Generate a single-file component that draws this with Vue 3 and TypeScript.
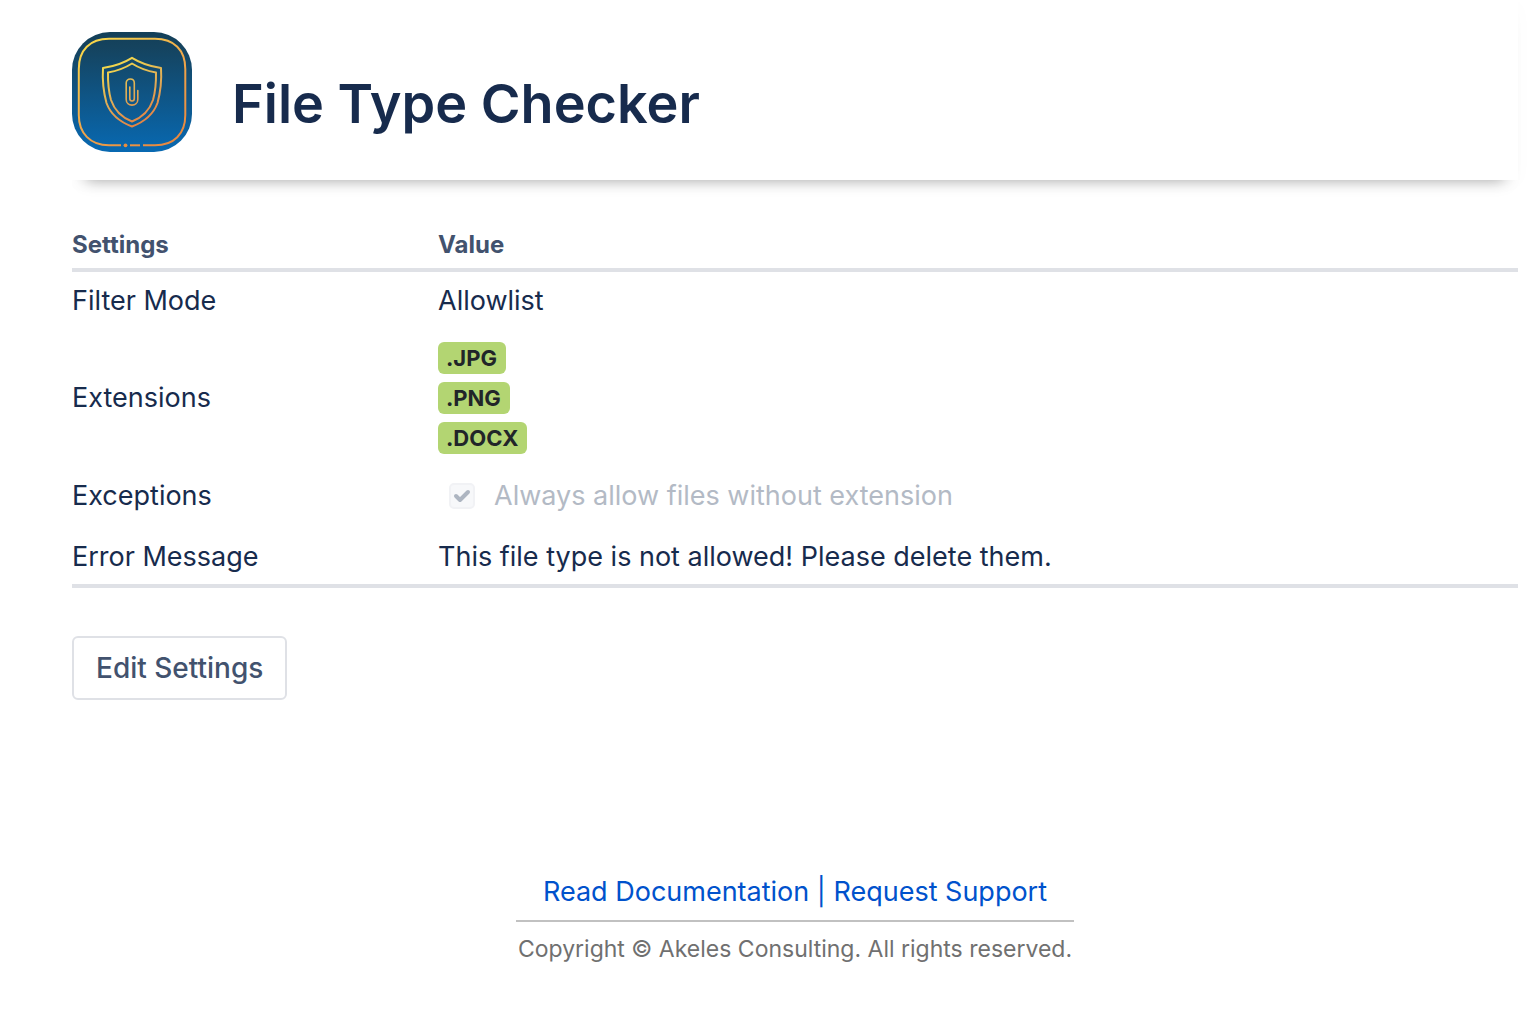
<script setup lang="ts">
import { ref } from 'vue'

const filterMode = ref<string>('Allowlist')
const extensions = ref<string[]>(['.JPG', '.PNG', '.DOCX'])
const allowWithoutExtension = ref<boolean>(true)
const errorMessage = ref<string>('This file type is not allowed! Please delete them.')
</script>

<template>
  <main class="page">
    <header class="banner">
      <svg class="logo" viewBox="0 0 120 120" aria-hidden="true">
        <defs>
          <linearGradient id="tile" x1="0" y1="0" x2="0" y2="1">
            <stop offset="0" stop-color="#133f58" />
            <stop offset="0.12" stop-color="#15435e" />
            <stop offset="1" stop-color="#0869b2" />
          </linearGradient>
          <linearGradient id="gold" gradientUnits="userSpaceOnUse" x1="20" y1="6" x2="95" y2="116">
            <stop offset="0" stop-color="#f9d84a" />
            <stop offset="0.5" stop-color="#f0a84b" />
            <stop offset="1" stop-color="#e8873f" />
          </linearGradient>
          <linearGradient id="crest" gradientUnits="userSpaceOnUse" x1="40" y1="28" x2="72" y2="94">
            <stop offset="0" stop-color="#f5dc4b" />
            <stop offset="0.5" stop-color="#dfad57" />
            <stop offset="1" stop-color="#e57f42" />
          </linearGradient>
        </defs>
        <rect width="120" height="120" rx="38" fill="url(#tile)" />
        <g fill="none" stroke="url(#gold)" stroke-width="2">
          <path d="M49 113.300H37C18 113.300 6.800 101 6.800 83V37C6.800 18 18 6.800 37 6.800H83C102 6.800 113.300 18 113.300 37V83C113.300 102 102 113.300 83 113.300H71" />
          <path d="M58 113.300H68" />
        </g>
        <circle cx="53.500" cy="113.300" r="1.900" fill="#e98d3e" />
        <g fill="none" stroke="url(#crest)" stroke-width="2" stroke-linejoin="round" stroke-linecap="round">
          <path d="M60 25.800C51 31.500 41 34.500 31 36C30.300 47 31.500 60 34.500 71C38.500 82 48 90 60 94.500C72 90 81.500 82 85.500 71C88.500 60 89.700 47 89 36C79 34.500 69 31.500 60 25.800Z" />
          <path d="M60 31.500C53 36 44.500 39 36 40.500C35.800 50 36.500 59 39 68C42.500 78.500 50 85.500 60 89.500C70 85.500 77.500 78.500 81 68C83.500 59 84.200 50 84 40.500C75.500 39 67 36 60 31.500Z" />
          <path d="M57.800 55V66.500C57.800 69.800 62.300 69.800 62.300 66.500V51C62.300 45.700 54.200 45.700 54.200 51V67.500C54.200 75 65.800 75 65.800 67.500V58.500" stroke-width="1.6" />
        </g>
      </svg>
      <h1 class="title">File Type Checker</h1>
    </header>

    <table class="settings">
      <thead>
        <tr>
          <th class="name" scope="col">Settings</th>
          <th scope="col">Value</th>
        </tr>
      </thead>
      <tbody>
        <tr>
          <td>Filter Mode</td>
          <td>{{ filterMode }}</td>
        </tr>
        <tr>
          <td>Extensions</td>
          <td>
            <ul class="tags">
              <li v-for="ext in extensions" :key="ext" class="tag">{{ ext }}</li>
            </ul>
          </td>
        </tr>
        <tr>
          <td>Exceptions</td>
          <td>
            <label class="check">
              <input v-model="allowWithoutExtension" class="box" type="checkbox" disabled />
              <svg v-if="allowWithoutExtension" class="tick" viewBox="0 0 26 26" aria-hidden="true">
                <path d="M7 13L11 17L19 9" />
              </svg>
              <span>Always allow files without extension</span>
            </label>
          </td>
        </tr>
        <tr class="last">
          <td>Error Message</td>
          <td>{{ errorMessage }}</td>
        </tr>
      </tbody>
    </table>

    <button class="edit" type="button">Edit Settings</button>

    <footer class="footer">
      <nav class="links">
        <a href="#documentation">Read Documentation</a> | <a href="#support">Request Support</a>
      </nav>
      <p class="copyright">Copyright © Akeles Consulting. All rights reserved.</p>
    </footer>
  </main>
</template>

<style>
body {
  background: #fff;
}
</style>

<style scoped>
.page {
  padding: 0 14px 32px 72px;
  color: #172b4d;
  font-family: Inter, "Liberation Sans", sans-serif;
  font-size: 27px;
  line-height: 40px;
}

.banner {
  display: flex;
  align-items: flex-start;
  gap: 40px;
  padding: 32px 0 28px;
  box-shadow: 0 14px 14px -14px rgba(0, 0, 0, 0.36), 0 4px 20px rgba(0, 0, 0, 0.02);
  clip-path: inset(0 -14px -40px 0);
}

.logo {
  flex: none;
  width: 120px;
  height: 120px;
}

.title {
  margin: 40px 0 0;
  font-size: 54px;
  font-weight: 600;
  line-height: 64px;
}

.settings {
  width: 100%;
  margin-top: 40px;
  border-collapse: separate;
  border-spacing: 0;
  border-bottom: 4px solid #dfe1e6;
}

.name {
  width: 366px;
}

.settings th {
  padding: 9px 0 7px;
  border-bottom: 4px solid #dfe1e6;
  color: #42526e;
  font-size: 24px;
  font-weight: 700;
  line-height: 32px;
  text-align: left;
}

.settings td {
  height: 58px;
  padding: 0;
  vertical-align: middle;
}

.settings .last td {
  height: 54px;
  padding-top: 4px;
}

.tags {
  display: flex;
  flex-direction: column;
  align-items: flex-start;
  gap: 8px;
  margin: 0;
  padding: 12px 0;
  list-style: none;
}

.tag {
  padding: 0 9px 0 8px;
  border-radius: 6px;
  background: #b3d572;
  color: #212529;
  font-size: 22px;
  font-weight: 700;
  line-height: 32px;
}

.check {
  display: flex;
  position: relative;
  align-items: center;
  gap: 19px;
  padding: 10px 0 10px 11px;
  color: #b3bac5;
}

.box {
  appearance: none;
  flex: none;
  width: 26px;
  height: 26px;
  margin: 0;
  border: 2px solid #f1f2f5;
  border-radius: 5px;
  background: #f7f8fa;
}

.tick {
  position: absolute;
  left: 11px;
  width: 26px;
  height: 26px;
  fill: none;
  stroke: #adb5c1;
  stroke-width: 4;
  stroke-linecap: round;
  stroke-linejoin: round;
}

.edit {
  margin-top: 48px;
  padding: 10px 22px;
  border: 2px solid #dfe1e6;
  border-radius: 6px;
  background: #fff;
  color: #42526e;
  font: inherit;
  font-size: 28px;
  font-weight: 500;
}

.footer {
  display: flex;
  flex-direction: column;
  align-items: center;
  margin-top: 172px;
}

.links {
  padding: 0 27px 8px;
  border-bottom: 2px solid #c1c1c1;
  color: #0052cc;
}

.links a {
  color: #0052cc;
  text-decoration: none;
}

.copyright {
  margin: 11px 0 0;
  color: #707070;
  font-size: 23px;
  line-height: 32px;
}
</style>
